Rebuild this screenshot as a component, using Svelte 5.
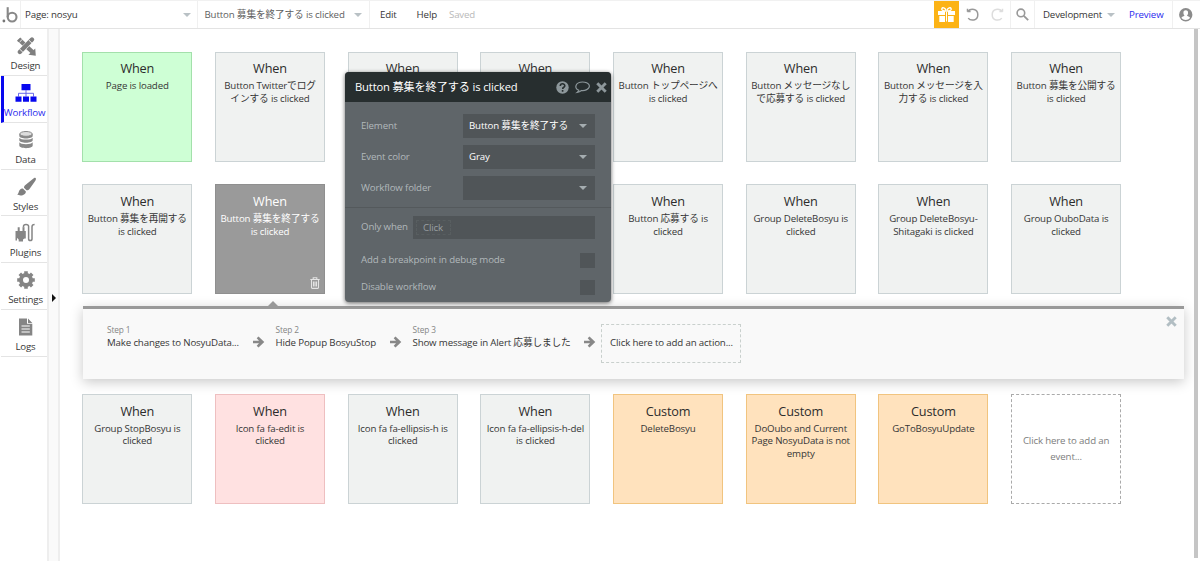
<script>
  const nav = [
    { id: 'design', label: 'Design' },
    { id: 'workflow', label: 'Workflow' },
    { id: 'data', label: 'Data' },
    { id: 'styles', label: 'Styles' },
    { id: 'plugins', label: 'Plugins' },
    { id: 'settings', label: 'Settings' },
    { id: 'logs', label: 'Logs' }
  ];
  const rows = [
    [
      { lines: ['Page is loaded'], tone: 'green' },
      { lines: ['Button Twitterでログ', 'インする is clicked'] },
      { lines: [] },
      { lines: [] },
      { lines: ['Button トップページへ', 'is clicked'] },
      { lines: ['Button メッセージなし', 'で応募する is clicked'] },
      { lines: ['Button メッセージを入', '力する is clicked'] },
      { lines: ['Button 募集を公開する', 'is clicked'] }
    ],
    [
      { lines: ['Button 募集を再開する', 'is clicked'] },
      { lines: ['Button 募集を終了する', 'is clicked'], tone: 'selected' },
      { title: '', lines: [] },
      { title: '', lines: [] },
      { lines: ['Button 応募する is', 'clicked'] },
      { lines: ['Group DeleteBosyu is', 'clicked'] },
      { lines: ['Group DeleteBosyu-', 'Shitagaki is clicked'] },
      { lines: ['Group OuboData is', 'clicked'] }
    ],
    [
      { lines: ['Group StopBosyu is', 'clicked'] },
      { lines: ['Icon fa fa-edit is', 'clicked'], tone: 'red' },
      { lines: ['Icon fa fa-ellipsis-h is', 'clicked'] },
      { lines: ['Icon fa fa-ellipsis-h-del', 'is clicked'] },
      { title: 'Custom', lines: ['DeleteBosyu'], tone: 'orange' },
      { title: 'Custom', lines: ['DoOubo and Current', 'Page NosyuData is not', 'empty'], tone: 'orange' },
      { title: 'Custom', lines: ['GoToBosyuUpdate'], tone: 'orange' }
    ]
  ];
  const steps = [
    { n: 'Step 1', text: 'Make changes to NosyuData...', w: 146 },
    { n: 'Step 2', text: 'Hide Popup BosyuStop', w: 114.5 },
    { n: 'Step 3', text: 'Show message in Alert 応募しました', w: 171.5 }
  ];
</script>

{#snippet cardRow(items, add)}
  <div class="cards">
    {#each items as c}
      <div class="card {c.tone ?? ''}">
        <h3>{c.title ?? 'When'}</h3>
        {#each c.lines as l}<p>{l}</p>{/each}
        {#if c.tone === 'selected'}
          <svg class="trash" viewBox="0 0 10 12"><path d="M.3 2.5h9.4M3.2 2.3V.7h3.6v1.6M1.5 3v7.6q0 .8.8.8h5.4q.8 0 .8-.8V3M3.5 4.5v5M5 4.5v5M6.5 4.5v5" fill="none" stroke="#e4e4e4" stroke-width="1.1" /></svg>
        {/if}
      </div>
    {/each}
    {#if add}<div class="card add"><p>Click here to add an</p><p>event...</p></div>{/if}
  </div>
{/snippet}

{#snippet cross(cls)}
  <svg class={cls} viewBox="0 0 11 11"><path d="M2.300 2.300l6.400 6.400M8.700 2.300l-6.400 6.400" stroke="currentColor" stroke-width="2.900" stroke-linecap="square" /></svg>
{/snippet}

<div class="app">
  <header>
    <div class="logo">
      <svg viewBox="0 0 16 18"><circle cx="10.1" cy="11.1" r="4.4" fill="none" stroke="#888" stroke-width="2.1" /><path d="M5.7 1.2v10" stroke="#888" stroke-width="2.1" /><circle cx="1.9" cy="15" r="1.4" fill="#777" /></svg>
    </div>
    <div class="page-select"><span>Page: nosyu</span><i class="caret"></i></div>
    <div class="event-select"><span>Button 募集を終了する is clicked</span><i class="caret"></i></div>
    <span class="edit">Edit</span><span class="help">Help</span><span class="saved">Saved</span>
    <div class="right">
      <div class="gift">
        <svg viewBox="0 0 17 15"><path d="M0 4h7v4H0zM10 4h7v4h-7zM1.3 9h5.7v6H1.3zM10 9h5.7v6H10zM8 4.3h1v10.2H8z" fill="#fff" /><path d="M8 4C4.5 4 3.4 2.8 3.8 1.7 4.4.1 7 .5 8.2 3.7M9 4c3.5 0 4.6-1.2 4.2-2.3C12.6.1 10 .5 8.8 3.7" fill="none" stroke="#fff" stroke-width="1.3" /></svg>
      </div>
      <svg class="undo" viewBox="0 0 13 13"><path d="M1.4 3.4H4.6M1.5 .8V3.7M1.8 3.5C5-.2 11.8 1 11.8 6.7c0 6.3-7.3 6.5-9.6 3.4" fill="none" stroke="#999" stroke-width="1.5" /></svg>
      <svg class="redo" viewBox="0 0 13 13"><path d="M11.6 3.4H8.4M11.5 .8V3.7M11.2 3.5C8-.2 1.2 1 1.2 6.7c0 6.3 7.3 6.5 9.6 3.4" fill="none" stroke="#ddd" stroke-width="1.5" /></svg>
      <div class="search"><svg viewBox="0 0 13 13"><circle cx="4.9" cy="4.9" r="3.8" fill="none" stroke="#999" stroke-width="1.6" /><path d="M7.8 7.8l4.4 4.4" stroke="#999" stroke-width="1.8" /></svg></div>
      <span class="dev">Development</span><i class="caret"></i><span class="preview">Preview</span>
      <div class="user"><svg viewBox="0 0 14 14"><circle cx="7" cy="7" r="6.9" fill="#8b8b8b" /><path d="M7 2.4c1.8 0 2.5 1.2 2.4 2.7 0 1.2-.5 2-1.1 2.6.1 1 3 .8 3.1 2.7-1 1.4-2.7 2-4.4 2s-3.4-.6-4.4-2c.1-1.9 3-1.7 3.1-2.7-.6-.6-1.1-1.4-1.1-2.600C4.500 3.600 5.200 2.400 7 2.400z" fill="#fff" /></svg></div>
    </div>
  </header>

  <div class="body">
    <nav>
      {#each nav as n}
        <div class="item" class:active={n.id === 'workflow'}>
          <svg viewBox="0 0 22 20">
            {#if n.id === 'design'}
              <path d="M4 3.500L17.500 16" stroke="#7f7f7f" stroke-width="4.400" /><path d="M17 3.500L4.500 16.500" stroke="#fff" stroke-width="5.300" /><path d="M17 3.500L4.800 16" stroke="#7f7f7f" stroke-width="4.400" stroke-linecap="round" /><path d="M6 2.200L2.700 5.200M19.400 14.700l.3 3.900-4-.5z" stroke="#7f7f7f" stroke-width="2" fill="#7f7f7f" /><path d="M13.700 4l3.600 3.500M4.200 12.600l3.600 3.500M6.900 3.800L4.600 6" stroke="#fff" stroke-width=".9" />
            {:else if n.id === 'workflow'}
              <path d="M6.500 1h9v6.300h-9zM.5 13.500h6v5.200h-6zM8 13.500h6v5.200H8zM15.500 13.500h6v5.200h-6z" fill="#0808ef" /><path d="M11 7v7M3.500 14v-3.700h15V14" fill="none" stroke="#5b5be8" stroke-width=".9" />
            {:else if n.id === 'data'}
              <path d="M4.300 4v2c0 3.300 13.400 3.300 13.400 0V4M4.300 7.700v2.500c0 3.300 13.400 3.300 13.400 0V7.700c-1 2.500-12.400 2.500-13.400 0M4.300 12.300v3.200c0 3.500 13.400 3.500 13.400 0v-3.200c-1 2.500-12.400 2.500-13.400 0" fill="#898989" /><ellipse cx="11" cy="3.900" rx="6.200" ry="2.400" fill="#ddd" stroke="#898989" />
            {:else if n.id === 'styles'}
              <path d="M20.500.9c1.200.8-.2 3-1.400 4.600L14.500 12c-1 1.300-2 1.500-3 1.200L9 10.800c0-1.200.5-2 1.400-2.700L17.800 2c1-.8 1.900-1.600 2.700-1.100zM7.900 11.500l3 2.900c.2 3.200-4.600 5.200-8.900 3.200C4.300 17 3.300 11 7.900 11.500z" fill="#808080" />
            {:else if n.id === 'plugins'}
              <path d="M.500 8h10.300v7.500H9.500L8 16.500v2H3.700v-2L2.500 15.500v-.5H2v2.500H.5zM2.700 4.200h2V8h-2zM7.500 4.200h2V8h-2z" fill="#858585" /><path d="M8.500 4.500V3.300q0-1.800 2.500-1.800t2.600 1.800v12.400q0 1.900 1.700 1.900t1.700-1.900V3.700q0-2.200 2.600-2.200" fill="none" stroke="#858585" stroke-width="1.500" />
            {:else if n.id === 'settings'}
              <circle cx="11" cy="10" r="5" fill="none" stroke="#858585" stroke-width="4" /><g stroke="#858585" stroke-width="3.600"><path d="M11 1.200v4M11 14.800v4M2.200 10h4M15.800 10h4M4.800 3.800l2.400 2.400M14.800 13.800l2.400 2.400M4.800 16.200l2.400-2.400M14.800 6.200l2.400-2.400" /></g>
            {:else}
              <path d="M4 1.500h8v5.300h5.300v11.700H4zM13 1.500l4.300 4.400H13z" fill="#858585" /><path d="M6.500 9h8.300M6.500 12h8.300M6.500 15h8.300" stroke="#fff" stroke-width="1.200" />
            {/if}
          </svg>
          <span>{n.label}</span>
        </div>
      {/each}
    </nav>
    <div class="gutter"><i></i></div>

    <main>
      {@render cardRow(rows[0], false)}
      {@render cardRow(rows[1], false)}
      <section class="actions">
        <i class="pointer"></i>
        {#each steps as s}
          <div class="step" style="width:{s.w}px"><small>{s.n}</small><span>{s.text}</span></div>
          <svg class="arrow" viewBox="0 0 12 12"><path d="M0 4.700h6L3.700 2.300 5.500.5 11.300 6l-5.800 5.500-1.800-1.800L6 7.300H0z" fill="#888" /></svg>
        {/each}
        <div class="add-action">Click here to add an action...</div>
        {@render cross('close-panel')}
      </section>
      {@render cardRow(rows[2], true)}
      <div class="scroll"></div>
    </main>
  </div>

  <aside>
    <div class="head">
      <span>Button 募集を終了する is clicked</span>
      <svg class="q" viewBox="0 0 13 13"><circle cx="6.500" cy="6.500" r="6.200" fill="#8d979b" /><path d="M4.300 5c0-3 4.500-2.800 4.500-.3 0 1.600-2.100 1.500-2.100 3.200M6.600 9v1.700" fill="none" stroke="#272e2f" stroke-width="1.600" /></svg>
      <svg class="bubble" viewBox="0 0 15 13"><path d="M3.800 9.300C-1.500 6.800.8 1 7.500 1s9.300 5 4.200 7.600c-1.700.9-3.600 1.100-5.200.9-1.300 1.100-2.700 1.700-4.300 1.900.9-.7 1.400-1.200 1.600-2.100z" fill="none" stroke="#8d979b" stroke-width="1.200" /></svg>
      {@render cross('x')}
    </div>
    <div class="form">
      <div class="row"><span>Element</span><div class="field"><span>Button 募集を終了する</span><i class="caret"></i></div></div>
      <div class="row"><span>Event color</span><div class="field"><span>Gray</span><i class="caret"></i></div></div>
      <div class="row"><span>Workflow folder</span><div class="field"><span></span><i class="caret"></i></div></div>
      <div class="only"><span>Only when</span><div class="expr"><em>Click</em></div></div>
      <div class="check"><span>Add a breakpoint in debug mode</span><i></i></div>
      <div class="check"><span>Disable workflow</span><i></i></div>
    </div>
  </aside>
</div>

<style>
  :global(body) { margin: 0; background: #fff; }
  .app { position: relative; width: 1200px; height: 562px; overflow: hidden; background: #fff; color: #363636; font: 9.7px/12.5px "Open Sans", "Noto Sans CJK JP", sans-serif; letter-spacing: -.15px; white-space: nowrap; }
  .app * { box-sizing: border-box; }
  svg { display: block; flex: none; overflow: visible; }
  .caret { flex: none; width: 0; height: 0; border: 4px solid transparent; border-top: 4px solid #b9c1c5; border-bottom: 0; }

  header { display: flex; align-items: center; height: 29px; border-top: 1.500px solid #f1f1f1; border-bottom: 1px solid #e3e3e3; }
  header > div { height: 100%; display: flex; align-items: center; }
  .logo { width: 21px; padding-left: 2px; border-right: 1px solid #f0f0f0; }
  .logo svg { width: 16px; height: 18px; }
  header span { position: relative; top: .5px; }
  .page-select { width: 177px; padding: 0 6px 0 4px; justify-content: space-between; border-right: 1px solid #f0f0f0; }
  .event-select { width: 171.500px; padding: 0 7px 0 6.500px; justify-content: space-between; border-right: 1px solid #f0f0f0; color: #606060; }
  .edit { margin-left: 10.500px; }
  .help { margin-left: 20px; }
  .saved { margin-left: 12px; color: #b9b9b9; }
  .right { margin-left: auto; }
  .gift { width: 25.500px; height: 27px; margin-right: 6.500px; display: grid; place-items: center; background: #fcb316; }
  .gift svg { width: 17px; height: 15px; }
  .undo, .redo { width: 13px; height: 13px; }
  .redo { margin-left: 12px; }
  .search { width: 25px; height: 100%; margin: 0 7.500px 0 6.500px; display: grid; place-items: center; border: solid #f0f0f0; border-width: 0 1px; }
  .search svg { width: 13px; height: 13px; }
  .right .caret { margin: 0 14px 0 5px; }
  .preview { color: #2c2cee; }
  .user { width: 28.500px; height: 100%; margin-left: 8px; padding-left: 6px; display: flex; align-items: center; border-left: 1px solid #f0f0f0; }
  .user svg { width: 13.500px; height: 13.500px; }

  .body { display: flex; height: 533px; }
  nav { width: 47px; padding-left: 1px; }
  .item { height: 46.850px; padding: 7px 0 0 3px; display: flex; flex-direction: column; align-items: center; border-bottom: 1px solid #e4e4e4; }
  .item svg { width: 22px; height: 20px; }
  .item span { margin-top: 4px; }
  .active { padding-left: 0; border-left: 3px solid #0808ef; color: #2c2cee; }
  .active span { margin-left: -2px; }
  .gutter { width: 13px; height: 532px; display: flex; align-items: center; padding-left: 4px; background: #fafafa; border: solid #eee; border-width: 0 2px; }
  .gutter i { border: 4px solid transparent; border-left: 4px solid #111; border-right: 0; margin-top: 5px; margin-left: -1px; }

  main { position: relative; flex: 1; padding: 22.500px 0 0 22.300px; }
  .cards { display: flex; gap: 22.700px; margin-bottom: 22.800px; }
  .card { position: relative; width: 110px; height: 110px; padding-top: 7.500px; text-align: center; color: #363636; background: #f0f2f1; border: 1px solid #cbd3d5; }
  h3 { height: 17px; margin: 0 0 3.300px; font-size: 12.700px; font-weight: 400; line-height: 17px; color: #2c2c2c; }
  p { margin: 0; line-height: 12.500px; }
  .green { background: #ceffd5; border-color: #a3e0ab; }
  .red { background: #ffe1e1; border-color: #eebfc0; }
  .orange { background: #ffe2bd; border-color: #f1c47f; }
  .selected { background: #9a9a9a; border-color: #8f8f8f; color: #fff; }
  .selected h3 { color: #fff; }
  .trash { position: absolute; right: 4px; bottom: 4px; width: 10px; height: 12px; }
  .add { padding-top: 38px; background: #fff; border: 1px dashed #aaa; color: #7d7d7d; }
  .add p { line-height: 16px; }

  .actions { position: relative; display: flex; width: 1101px; height: 73px; margin: -11.400px 0 15.400px .7px; padding: 15px 0 0 24px; background: #f9f9f9; border-top: 3px solid #999; box-shadow: 0 3px 12px rgba(0, 0, 0, .22); }
  .pointer { position: absolute; left: 185px; top: -8px; border: 5px solid transparent; border-bottom-color: #999; border-top: 0; }
  .step small { display: block; font-size: 8.300px; line-height: 12px; color: #858585; }
  .step span { display: block; line-height: 13px; }
  .arrow { width: 12px; height: 12px; margin: 12px 10.500px 0 0; }
  .add-action { width: 140px; height: 39px; margin-left: -5px; text-align: center; line-height: 36px; border: 1px dashed #c9d0cd; }
  .close-panel { position: absolute; right: 6.500px; top: 7px; width: 11px; height: 11px; color: #b2bec3; }
  .scroll { position: absolute; right: 2px; top: 0; width: 4px; height: 529px; background: #c5c5c5; }

  aside { position: absolute; left: 345px; top: 72px; width: 265.500px; height: 229.500px; border-radius: 4px; overflow: hidden; background: #5f6569; color: #b1b8bb; box-shadow: 0 1px 4px rgba(0, 0, 0, .6); }
  .head { display: flex; align-items: center; height: 30px; padding: 1px 4px 0 10px; background: #272e2f; }
  .head span { flex: 1; font-size: 11.200px; color: #fff; }
  .q { width: 13px; height: 13px; }
  .bubble { width: 15px; height: 13px; margin: 0 6px; }
  .x { width: 11px; height: 11px; color: #8d979b; }
  .form { padding-top: 12px; }
  .row { display: flex; align-items: center; justify-content: space-between; height: 24px; margin-bottom: 7px; padding: 0 16px; }
  .field { display: flex; align-items: center; justify-content: space-between; width: 131.500px; height: 24px; padding: 0 8px 0 6px; background: #505558; color: #fff; }
  .field .caret { border-top-color: #a5adb0; }
  .only { display: flex; align-items: center; justify-content: space-between; height: 40px; padding: 0 15.500px 0 16px; border-top: 1px solid #54595c; }
  .expr { width: 182px; height: 23px; padding: 4px 3px; background: #505558; }
  em { display: block; width: 35px; height: 15px; padding-left: 6px; font-style: normal; line-height: 14px; color: #999fa1; border: 1px dashed #585e60; }
  .check { display: flex; align-items: center; justify-content: space-between; height: 27px; padding: 0 15.500px 0 16px; }
  .check span { position: relative; top: -.5px; }
  .check i { width: 15px; height: 15px; background: #505558; }
</style>
